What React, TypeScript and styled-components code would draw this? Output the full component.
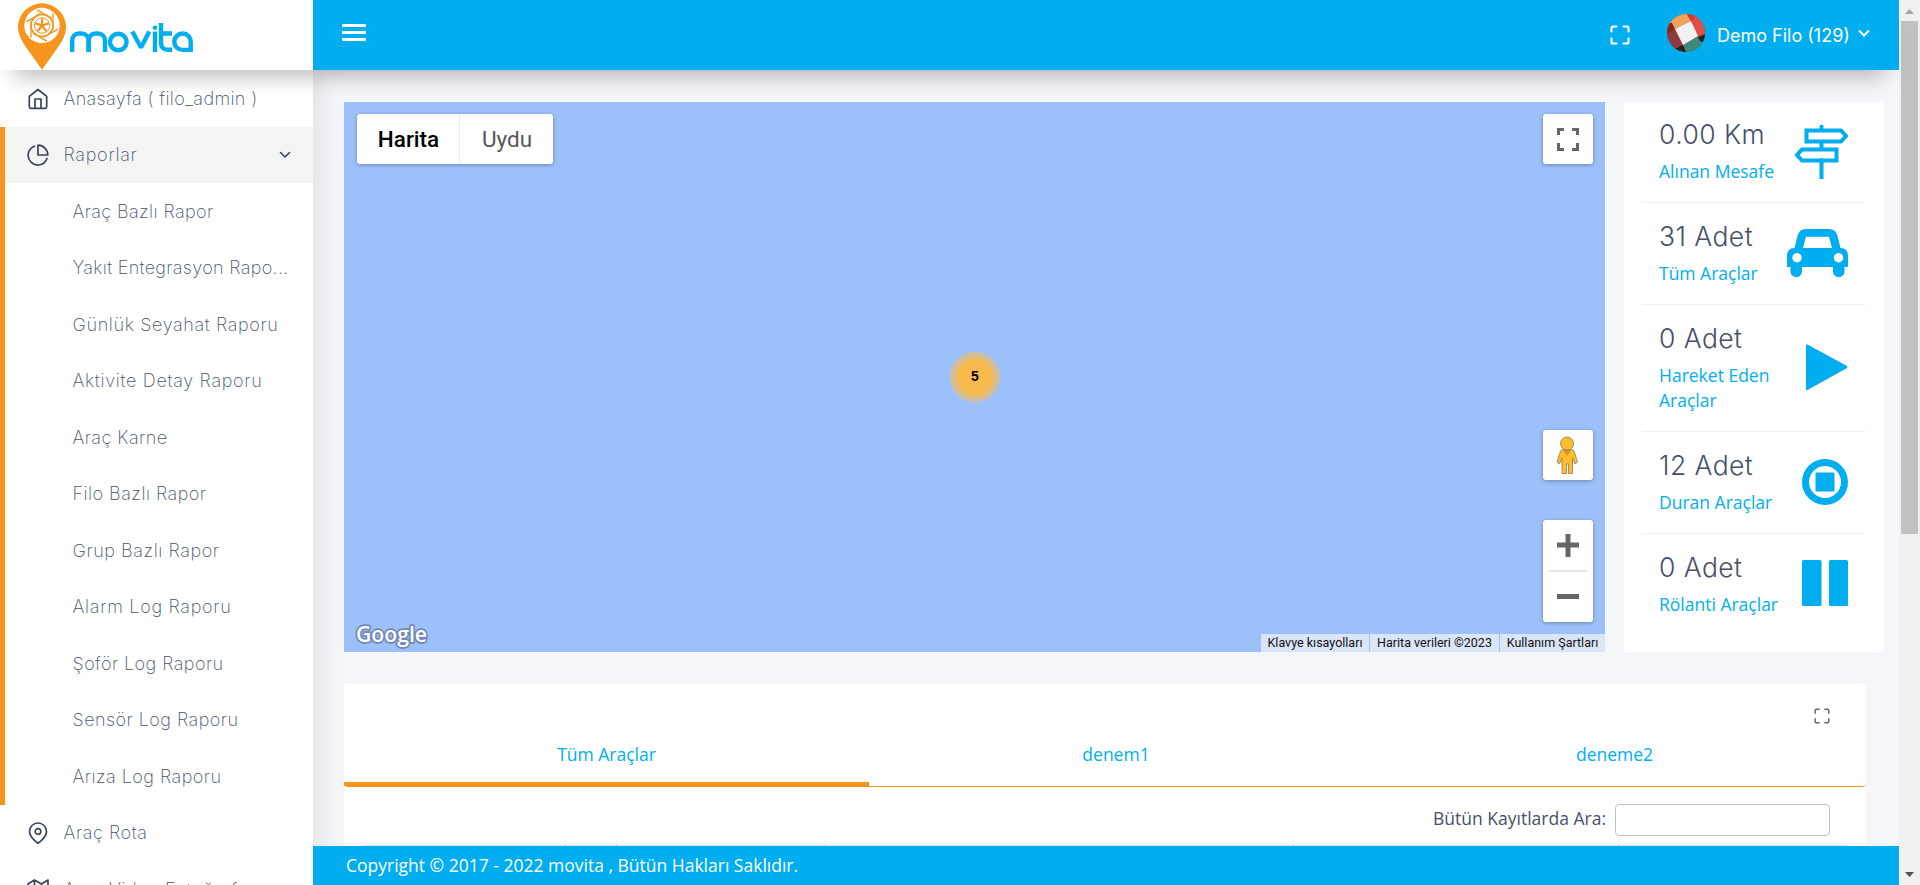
import React from "react";
import styled, { createGlobalStyle, css } from "styled-components";

const BLUE = "#00aeef";
const ORANGE = "#f7941d";

const Global = createGlobalStyle`
  *, *::before, *::after { box-sizing: border-box; }
  html, body { margin: 0; height: 100%; overflow: hidden; background: #f5f6fa; }
  body { font-family: "Open Sans", sans-serif; color: #475069; font-size: 17.5px; }
  #root { height: 100%; }
`;

const geometric = css`font-family: Inter, sans-serif;`;

const Page = styled.div`
  display: grid;
  grid-template-columns: 313px 1586px 21px;
  grid-template-rows: 70px 776px 39px;
  height: 885px;
  overflow: hidden;
`;

const Header = styled.header`
  grid-column: 1 / 3;
  grid-row: 1;
  display: flex;
  z-index: 3;
  box-shadow: 0 20px 22px -14px rgba(0, 0, 0, 0.28);
`;

const Brand = styled.div`
  width: 313px;
  background: #fff;
`;

const TopBar = styled.div`
  flex: 1;
  display: flex;
  align-items: center;
  background: ${BLUE};
  color: #fff;
  padding: 0 29px;
`;

const Burger = styled.div`
  display: flex;
  flex-direction: column;
  gap: 4px;
  width: 24px;
  margin-bottom: 5px;
  span { height: 3px; border-radius: 1px; background: #fff; }
`;

const UserArea = styled.div`
  margin-left: auto;
  display: flex;
  align-items: center;
  svg { display: block; }
`;

const Avatar = styled.svg`
  margin: 0 0 5px 37px;
`;

const UserName = styled.span`
  ${geometric}
  font-size: 18px;
  line-height: 24px;
  white-space: nowrap;
  width: 133px;
  margin: 2px 8px 0 12px;
`;

const Sidebar = styled.nav`
  grid-column: 1;
  grid-row: 2 / 4;
  background: #fff;
  overflow: hidden;
  z-index: 2;
  box-shadow: 4px 0 28px rgba(0, 0, 0, 0.1);
`;

const Group = styled.div`
  border-left: 5px solid ${ORANGE};
`;

const MenuItem = styled.div<{ $open?: boolean; $sub?: boolean }>`
  height: 56.5px;
  display: flex;
  align-items: center;
  padding-left: ${(p) => (p.$sub ? 67.5 : p.$open ? 22 : 27)}px;
  padding-top: ${(p) => (p.$open ? 0 : 1)}px;
  background: ${(p) => (p.$open ? "#f4f4f4" : "#fff")};
  color: #3f4d63;
  svg { flex: none; }
  svg + span { margin-left: 14.5px; }
  svg:last-child:not(:first-child) { margin: 0 22px 0 auto; }
`;

const MenuText = styled.span<{ $w: number }>`
  ${geometric}
  font-weight: 200;
  font-size: 18px;
  line-height: 24px;
  white-space: nowrap;
  color: #46536a;
  width: ${(p) => p.$w}px;
`;

const Main = styled.main`
  grid-column: 2;
  grid-row: 2;
  padding: 32px 15px 0 31px;
  overflow: hidden;
`;

const TopRow = styled.div`
  display: flex;
  gap: 19px;
  height: 550px;
`;

const MapPanel = styled.section`
  width: 1261px;
  background: #9cc0fa;
  display: grid;
  grid-template-columns: 1fr 1fr 1fr;
  grid-template-rows: 520px 30px;
  position: relative;
`;

const MapTypes = styled.div`
  display: flex;
  width: 196px;
  height: 50px;
  margin: 12px 0 0 13px;
  background: #fff;
  border-radius: 3px;
  box-shadow: 0 1px 4px rgba(0, 0, 0, 0.3);
`;

const MapType = styled.div<{ $active?: boolean }>`
  width: ${(p) => (p.$active ? 103 : 93)}px;
  display: flex;
  align-items: center;
  justify-content: center;
  padding-left: 1px;
  font-family: Roboto, sans-serif;
  font-size: 22.5px;
  font-weight: ${(p) => (p.$active ? 500 : 400)};
  color: ${(p) => (p.$active ? "#000" : "#565656")};
  border-right: ${(p) => (p.$active ? "1px solid #ececec" : "0")};
`;

const Cluster = styled.div`
  position: absolute;
  left: 606px;
  top: 250px;
  width: 50px;
  height: 50px;
  border-radius: 50%;
  background: #d3be97;
  display: grid;
  place-items: center;
  span {
    width: 38px;
    height: 38px;
    border-radius: 50%;
    background: #f8ba4f;
    color: #000;
    font: bold 14px/37px "Liberation Sans", sans-serif;
    text-align: center;
  }
`;

const MapControls = styled.div`
  grid-column: 3;
  grid-row: 1;
  justify-self: end;
  display: flex;
  flex-direction: column;
  padding: 12px 12px 0 0;
`;

const Control = styled.div<{ $mt?: number; $h?: number }>`
  width: 50px;
  height: ${(p) => p.$h ?? 50}px;
  margin-top: ${(p) => p.$mt ?? 0}px;
  background: #fff;
  border-radius: 3px;
  box-shadow: 0 1px 4px rgba(0, 0, 0, 0.3);
  svg { display: block; }
`;

const MapFooter = styled.div`
  grid-column: 1 / 4;
  grid-row: 2;
  display: flex;
  align-items: flex-end;
  justify-content: space-between;
`;

const GoogleMark = styled.svg`
  display: block;
  text {
    font-family: "Open Sans", sans-serif;
    font-weight: 600;
    font-size: 22px;
    fill: #fff;
    stroke: #7288b4;
    stroke-width: 3.5px;
    stroke-linejoin: round;
    paint-order: stroke;
  }
`;

const Legal = styled.div`
  display: flex;
  gap: 1px;
  span {
    height: 18px;
    background: #dae5f6;
    color: #111;
    font: 12.5px/18px Roboto, sans-serif;
    text-align: center;
    white-space: nowrap;
  }
  span:nth-child(1) { width: 108px; }
  span:nth-child(2) { width: 129px; }
  span:nth-child(3) { width: 105px; }
`;

const Stats = styled.aside`
  width: 260px;
  background: #fff;
  padding: 0 19px 0 18px;
`;

const Stat = styled.div<{ $h: number }>`
  height: ${(p) => p.$h}px;
  display: flex;
  justify-content: space-between;
  padding: 16px 17px 0 17px;
  border-bottom: 1px solid #ebeef2;
  &:last-child { border-bottom: 0; }
`;

const StatText = styled.div<{ $top?: number }>`
  width: 122px;
  padding-top: ${(p) => p.$top ?? 1}px;
`;

const StatValue = styled.div`
  ${geometric}
  font-weight: 300;
  font-size: 26.5px;
  line-height: 33px;
  letter-spacing: 0.45px;
  color: #475069;
  white-space: nowrap;
`;

const StatLabel = styled.div`
  margin-top: 8px;
  font-size: 17.5px;
  line-height: 25px;
  color: ${BLUE};
`;

const StatIcon = styled.svg<{ $mt: number }>`
  flex: none;
  margin-top: ${(p) => p.$mt}px;
`;

const Panel = styled.section`
  width: 1522px;
  height: 200px;
  margin-top: 32px;
  background: #fff;
  display: flex;
  flex-direction: column;
`;

const PanelTools = styled.div`
  height: 44px;
  padding: 24px 36px 0 0;
  display: flex;
  justify-content: flex-end;
`;

const Tabs = styled.div`
  display: flex;
  height: 59px;
  border-bottom: 1px solid ${ORANGE};
  border-radius: 0 0 4px 4px;
`;

const Tab = styled.div<{ $w: number; $active?: boolean }>`
  width: ${(p) => p.$w}px;
  text-align: center;
  color: ${BLUE};
  font-size: 17.5px;
  line-height: 24px;
  padding-top: 14px;
  border-bottom: ${(p) => (p.$active ? `4px solid ${ORANGE}` : "0")};
`;

const Search = styled.label`
  display: flex;
  justify-content: flex-end;
  align-items: center;
  gap: 9px;
  padding: 17px 36px 0 0;
  font-size: 17.5px;
  white-space: nowrap;
  span { padding-bottom: 4px; }
`;

const SearchInput = styled.input`
  width: 215px;
  height: 32px;
  border: 1px solid #babfc7;
  border-radius: 4px;
  background: #fff;
`;

const TableHead = styled.div`
  margin: 9px 18px 0 18px;
  height: 1px;
  display: grid;
  grid-template-columns: 203px 50px 208px 467px 324px 1fr;
  gap: 1px;
  background: #9aa8b8;
  span { background: #e1e8ee; }
`;

const Footer = styled.footer`
  grid-column: 2;
  grid-row: 3;
  z-index: 3;
  background: ${BLUE};
  color: #fff;
  font-size: 17.5px;
  line-height: 39px;
  padding-left: 33px;
`;

const ScrollTrack = styled.div`
  grid-column: 3;
  grid-row: 1 / 4;
  background: #f0f0f0;
  display: flex;
  flex-direction: column;
  align-items: center;
  svg { display: block; }
`;

const Thumb = styled.div`
  width: 17px;
  height: 513px;
  background: #c1c1c1;
  margin-bottom: auto;
`;

function Logo() {
  return (
    <svg width="200" height="70" viewBox="0 0 200 70">
      <path d="M42 3.300a24 24 0 0 0-24 24c0 9 6 17 10 22.700l14 19.700 14-19.700c4-5.700 10-13.700 10-22.700a24 24 0 0 0-24-24z" fill={ORANGE} />
      <circle cx="42" cy="25.500" r="17.700" fill="#fff" />
      <g fill="none" stroke={ORANGE}>
        <circle cx="42" cy="25.500" r="11" strokeWidth="1.400" />
        <circle cx="42" cy="25.500" r="7.700" strokeWidth="1" />
        {[0, 60, 120, 180, 240, 300].map((a) => (
          <path key={a} d="M31 21V37.500" strokeWidth="1.400" transform={`rotate(${a} 42 25.500)`} />
        ))}
        {[0, 72, 144, 216, 288].map((a) => (
          <path key={a} d="M42 25.500V18.500" strokeWidth="2.200" transform={`rotate(${a} 42 25.500)`} />
        ))}
      </g>
      <g fill="none" stroke={BLUE} strokeWidth="4.400">
        <path d="M72.200 52V40.500a6.800 6.800 0 0 1 6.800-7h2.600a7 7 0 0 1 7 7V52" />
        <path d="M88.600 52V40.500a7 7 0 0 1 7-7h2.400a7 7 0 0 1 7 7V52" />
        <circle cx="118.300" cy="42" r="8.300" />
        <path d="M132.300 31.500L141 47.500L149.300 31.500" strokeLinejoin="bevel" />
        <path d="M155 31.500V52M161 23V43.500a6.300 6.300 0 0 0 6.300 6.300H172M161 33.500H172" />
        <path d="M190.700 52V42a8.200 8.200 0 1 0-8.200 7.900H190.700" />
      </g>
      <circle cx="155" cy="27.800" r="2.300" fill={BLUE} />
    </svg>
  );
}

const Line = ({ children }: { children: React.ReactNode }) => (
  <svg width="22" height="22" viewBox="0 0 22 22" fill="none" stroke="#37465b" strokeWidth="1.700" strokeLinecap="round" strokeLinejoin="round">
    {children}
  </svg>
);

const Corners = ({ size, color, w }: { size: number; color: string; w: number }) => (
  <svg width={size} height={size} viewBox="0 0 20 20" fill="none" stroke={color} strokeWidth={w} strokeLinecap="round">
    <path d="M1.500 6.500V3A1.500 1.500 0 0 1 3 1.500H6.500M13.500 1.500H17A1.500 1.500 0 0 1 18.500 3V6.500M18.500 13.500V17A1.500 1.500 0 0 1 17 18.500H13.500M6.500 18.500H3A1.500 1.500 0 0 1 1.500 17V13.500" />
  </svg>
);

const Chevron = () => (
  <svg width="12" height="8" viewBox="0 0 12 8" fill="none" stroke="#37465b" strokeWidth="1.600" strokeLinecap="round" strokeLinejoin="round">
    <path d="M1.500 1.500L6 6L10.500 1.500" />
  </svg>
);

const reports: [string, number][] = [
  ["Araç Bazlı Rapor", 141],
  ["Yakıt Entegrasyon Rapo...", 216],
  ["Günlük Seyahat Raporu", 206],
  ["Aktivite Detay Raporu", 190],
  ["Araç Karne", 95],
  ["Filo Bazlı Rapor", 134],
  ["Grup Bazlı Rapor", 147],
  ["Alarm Log Raporu", 159],
  ["Şoför Log Raporu", 151],
  ["Sensör Log Raporu", 166],
  ["Arıza Log Raporu", 149],
];

/* Keeps a label at a fixed measure by distributing the remaining space between its letters. */
function Fitted({ text, width }: { text: string; width: number }) {
  const ref = React.useRef<HTMLSpanElement>(null);
  const [spacing, setSpacing] = React.useState(0);
  React.useLayoutEffect(() => {
    if (!ref.current) return;
    const natural = ref.current.getBoundingClientRect().width;
    setSpacing((width - natural) / text.length);
  }, [text, width]);
  return (
    <MenuText $w={width}>
      <span ref={ref} style={{ letterSpacing: spacing }}>{text}</span>
    </MenuText>
  );
}

export default function App() {
  return (
    <>
      <Global />
      <Page>
        <Header>
          <Brand><Logo /></Brand>
          <TopBar>
            <Burger><span /><span /><span /></Burger>
            <UserArea>
              <Corners size={20} color="#fff" w={2.2} />
              <Avatar width="38" height="38" viewBox="0 0 38 38">
                <clipPath id="avatar"><circle cx="19" cy="19" r="19" /></clipPath>
                <g clipPath="url(#avatar)">
                  <rect width="38" height="38" fill="#8b3a40" />
                  <path d="M0 0H20L24 7L8 15L0 9z" fill="#eda35f" />
                  <path d="M20 0H38V22L31 23L24 7z" fill="#e05048" />
                  <path d="M20 0H28L27 6L24 7z" fill="#dc3826" />
                  <path d="M0 8L5 9L8 15L0 20z" fill="#8a2415" />
                  <path d="M16 31L31 22L38 28V38H19z" fill="#40897a" />
                  <path d="M31 23L38 20V29L33 27zM8 35L16 31L19 38H8z" fill="#252321" />
                  <path d="M8 15L24 7L31 22L16 31z" fill="#f1f1f3" />
                </g>
              </Avatar>
              <UserName>Demo Filo (129)</UserName>
              <svg width="12" height="12" viewBox="0 0 12 12" fill="none" stroke="#fff" strokeWidth="2" strokeLinecap="round"><path d="M1.500 2L6 6.500L10.500 2" /></svg>
            </UserArea>
          </TopBar>
        </Header>

        <Sidebar>
          <MenuItem>
            <Line><path d="M2.300 8.300L11 1.500L19.700 8.300V18.500A1.800 1.800 0 0 1 18 20.300H4A1.800 1.800 0 0 1 2.300 18.500zM8 20V11H14V20" /></Line>
            <Fitted text="Anasayfa ( filo_admin )" width={194} />
          </MenuItem>
          <Group>
            <MenuItem $open>
              <Line><path d="M20 14.500A9.700 9.700 0 1 1 7.500 2.200M20.800 11A9.800 9.800 0 0 0 11 1.200V11z" /></Line>
              <Fitted text="Raporlar" width={74} />
              <Chevron />
            </MenuItem>
            {reports.map(([t, w]) => (
              <MenuItem key={t} $sub><Fitted text={t} width={w} /></MenuItem>
            ))}
          </Group>
          <MenuItem>
            <Line><path d="M19.500 9.500c0 6-8.500 11.700-8.500 11.700S2.500 15.500 2.500 9.500a8.500 8.500 0 0 1 17 0z" /><circle cx="11" cy="9.500" r="2.800" /></Line>
            <Fitted text="Araç Rota" width={84} />
          </MenuItem>
          <MenuItem>
            <Line><path d="M1 5V21L7.500 17L14.500 21L21 17V1L14.500 5L7.500 1zM7.500 1V17M14.500 5V21" /></Line>
            <Fitted text="Araç Video Fotoğraf" width={174} />
          </MenuItem>
        </Sidebar>

        <Main>
          <TopRow>
            <MapPanel>
              <MapTypes>
                <MapType $active>Harita</MapType>
                <MapType>Uydu</MapType>
              </MapTypes>
              <MapControls>
                <Control>
                  <svg width="50" height="50" fill="none" stroke="#666" strokeWidth="3"><path d="M15.500 21V15.500H21M29 15.500H34.500V21M34.500 29V35.500H29M21 35.500H15.500V29" /></svg>
                </Control>
                <Control $mt={266}>
                  <svg width="50" height="50" stroke="#8c7a55" strokeWidth="0.800">
                    <path d="M19 19.500H29L31 21L34.500 32L32 34L29.500 28V43.500H25.500V34H23.500V43.500H19V28L16.500 34L14 32L17.500 21z" fill="#fbbf2d" />
                    <path d="M20 20H28L24 26z" fill="#e88a2b" stroke="none" />
                    <circle cx="24" cy="13.500" r="6.500" fill="#fbbf2d" />
                  </svg>
                </Control>
                <Control $mt={40} $h={102}>
                  <svg width="50" height="102"><path d="M14 25H36M25 14V37M14 76.500H36" stroke="#666" strokeWidth="5" /><path d="M6 51H44" stroke="#e6e6e6" strokeWidth="2" /></svg>
                </Control>
              </MapControls>
              <MapFooter>
                <GoogleMark width="90" height="30">
                  <text x="12" y="20" textLength="71" lengthAdjust="spacingAndGlyphs">Google</text>
                </GoogleMark>
                <Legal><span>Klavye kısayolları</span><span>Harita verileri ©2023</span><span>Kullanım Şartları</span></Legal>
              </MapFooter>
              <Cluster><span>5</span></Cluster>
            </MapPanel>

            <Stats>
              <Stat $h={101}>
                <StatText $top={0}><StatValue>0.00 Km</StatValue><StatLabel>Alınan Mesafe</StatLabel></StatText>
                <StatIcon $mt={7} width="54" height="54" fill="none" stroke={BLUE} strokeWidth="4">
                  <path d="M27.500 1.500V5M27.500 17V23M27.500 35V53" strokeLinecap="round" />
                  <path d="M12.500 5.500H47L52 11L47 16.500H12.500zM42.500 24.500H8L3 30L8 35.500H42.500z" />
                </StatIcon>
              </Stat>
              <Stat $h={102}>
                <StatText><StatValue>31 Adet</StatValue><StatLabel>Tüm Araçlar</StatLabel></StatText>
                <StatIcon $mt={10} width="61" height="49" viewBox="0 0 61 49" fill={BLUE}>
                  <path fillRule="evenodd" d="M19 0H42A9 9 0 0 1 50.500 7L53.500 19A7 7 0 0 1 61 26V38H57.500V42.500a5.700 5.700 0 0 1-11.500 0V38H15V42.500a5.700 5.700 0 0 1-11.500 0V38H0V26A7 7 0 0 1 7.500 19L10.500 7A9 9 0 0 1 19 0zM19 7.700L16 19H45L42 7.700zM10 24a4.700 4.700 0 1 0 .01 0zM51.500 24a4.700 4.700 0 1 0 .01 0z" />
                </StatIcon>
              </Stat>
              <Stat $h={127}>
                <StatText><StatValue>0 Adet</StatValue><StatLabel>Hareket Eden Araçlar</StatLabel></StatText>
                <StatIcon $mt={23} width="42" height="47" fill={BLUE}><path d="M0 1.500Q0 0 1.500 0.500L41 22Q42 23 41 24L1.500 46Q0 46.500 0 45z" /></StatIcon>
              </Stat>
              <Stat $h={102}>
                <StatText><StatValue>12 Adet</StatValue><StatLabel>Duran Araçlar</StatLabel></StatText>
                <StatIcon $mt={11} width="46" height="46"><circle cx="23" cy="23" r="19.500" fill="none" stroke={BLUE} strokeWidth="7" /><rect x="13.500" y="13.500" width="19" height="19" rx="1" fill={BLUE} /></StatIcon>
              </Stat>
              <Stat $h={118}>
                <StatText><StatValue>0 Adet</StatValue><StatLabel>Rölanti Araçlar</StatLabel></StatText>
                <StatIcon $mt={10} width="46" height="46" fill={BLUE}><rect width="19.500" height="46" rx="1.500" /><rect x="27" width="19" height="46" rx="1.500" /></StatIcon>
              </Stat>
            </Stats>
          </TopRow>

          <Panel>
            <PanelTools><Corners size={16} color="#5c6880" w={1.8} /></PanelTools>
            <Tabs>
              <Tab $w={525} $active>Tüm Araçlar</Tab>
              <Tab $w={494}>denem1</Tab>
              <Tab $w={503}>deneme2</Tab>
            </Tabs>
            <Search><span>Bütün Kayıtlarda Ara:</span><SearchInput /></Search>
            <TableHead><span /><span /><span /><span /><span /><span /></TableHead>
          </Panel>
        </Main>

        <Footer>Copyright © 2017 - 2022 movita , Bütün Hakları Saklıdır.</Footer>

        <ScrollTrack>
          <svg width="21" height="21"><path d="M6 14L10.500 9L15 14z" fill="#a3a3a3" /></svg>
          <Thumb />
          <svg width="21" height="21"><path d="M6 8L10.500 13L15 8z" fill="#505050" /></svg>
        </ScrollTrack>
      </Page>
    </>
  );
}
